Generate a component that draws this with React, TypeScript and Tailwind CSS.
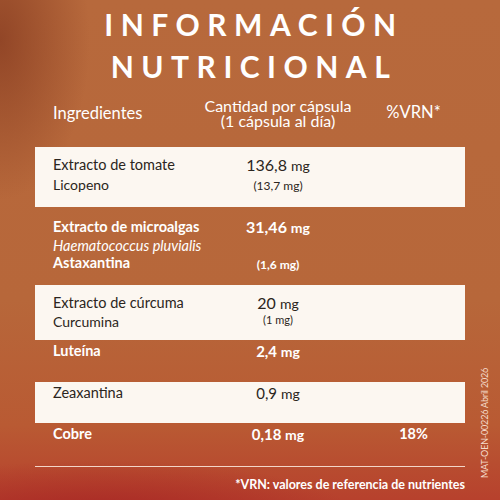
import React from "react";

const F = { fontFamily: "Lato, 'Open Sans', sans-serif" };

function Row({
  white,
  h,
  names,
  qty,
  vrn,
}: {
  white: boolean;
  h: string;
  names: React.ReactNode;
  qty: React.ReactNode;
  vrn?: string;
}) {
  return (
    <div
      className={
        "grid grid-cols-[183px_120px_1fr] items-start " +
        h +
        (white ? " bg-[#fcf7f1] text-[#2b2520]" : " text-white font-bold")
      }
    >
      <div className="pl-[18px]">{names}</div>
      <div className="text-center">{qty}</div>
      <div className="pl-[24px] text-center">{vrn}</div>
    </div>
  );
}

export default function App() {
  return (
    <div
      style={F}
      className="relative w-[500px] h-[500px] overflow-hidden bg-[radial-gradient(ellipse_90px_160px_at_0%_8%,rgba(130,55,30,0.7),rgba(130,55,30,0)),radial-gradient(ellipse_260px_60px_at_20%_104%,rgba(165,35,35,0.9),rgba(165,35,35,0)),linear-gradient(180deg,#b7693c_0%,#b7673a_60%,#b95a33_85%,#b7412d_100%)]"
    >
      <div className="pt-[3px] text-center text-white font-bold text-[30px] leading-[42px] tracking-[0.25em] pl-[8px]">
        <div>INFORMACIÓN</div>
        <div>NUTRICIONAL</div>
      </div>

      <div className="mx-[35px] mt-[3px] grid grid-cols-[183px_120px_1fr] items-center text-white text-[16.5px] h-[46px]">
        <div className="pl-[18px]">Ingredientes</div>
        <div className="flex flex-col items-center whitespace-nowrap -ml-[12px] -mr-[12px] text-[16px]">
          <span className="leading-[15px]">Cantidad por cápsula</span>
          <span className="leading-[15px]">(1 cápsula al día)</span>
        </div>
        <div className="pl-[24px] text-center -mt-[2px]">%VRN*</div>
      </div>

      <div className="mx-[35px] mt-[11px] text-[14.5px]">
        <Row
          white
          h="h-[60px] pt-[8px]"
          names={
            <div className="leading-[20px]">
              <div>Extracto de tomate</div>
              <div className="text-[14px]">Licopeno</div>
            </div>
          }
          qty={
            <div className="leading-[20px]">
              <div className="text-[16px]">
                136,8 <span className="text-[14px]">mg</span>
              </div>
              <div className="text-[12px]">(13,7 mg)</div>
            </div>
          }
        />
        <Row
          white={false}
          h="h-[78px] pt-[10px]"
          names={
            <div className="leading-[19px]">
              <div>Extracto de microalgas</div>
              <div className="italic font-normal">Haematococcus pluvialis</div>
              <div className="leading-[16px]">Astaxantina</div>
            </div>
          }
          qty={
            <div>
              <div className="text-[16px] leading-[19px]">
                31,46 <span className="text-[14px]">mg</span>
              </div>
              <div className="text-[12px] mt-[20px] leading-[16px]">(1,6 mg)</div>
            </div>
          }
        />
        <Row
          white
          h="h-[55px] pt-[8px]"
          names={
            <div className="leading-[19px]">
              <div>Extracto de cúrcuma</div>
              <div className="text-[14px]">Curcumina</div>
            </div>
          }
          qty={
            <div>
              <div className="text-[16px] leading-[19px]">
                20 <span className="text-[14px]">mg</span>
              </div>
              <div className="text-[11px] leading-[13px]">(1 mg)</div>
            </div>
          }
        />
        <Row
          white={false}
          h="h-[42px] items-center"
          names={<div>Luteína</div>}
          qty={
            <div className="text-[15px]">
              2,4 <span className="text-[14px]">mg</span>
            </div>
          }
        />
        <Row
          white
          h="h-[41px] items-center"
          names={<div>Zeaxantina</div>}
          qty={
            <div className="text-[15px]">
              0,9 <span className="text-[14px]">mg</span>
            </div>
          }
        />
        <Row
          white={false}
          h="h-[43px] items-center"
          names={<div>Cobre</div>}
          qty={
            <div className="text-[15px]">
              0,18 <span className="text-[14px]">mg</span>
            </div>
          }
          vrn="18%"
        />
        <div className="h-px bg-[#f3d6c8]" />
        <div className="text-right text-white font-bold text-[12.5px] mt-[9px]">
          *VRN: valores de referencia de nutrientes
        </div>
      </div>

      <div className="absolute left-[485px] top-[423px] -translate-x-1/2 -translate-y-1/2 -rotate-90 whitespace-nowrap text-[9px] text-[#f5dccc] tracking-[-0.02em]">
        MAT-OEN-00226 Abril 2026
      </div>
    </div>
  );
}
